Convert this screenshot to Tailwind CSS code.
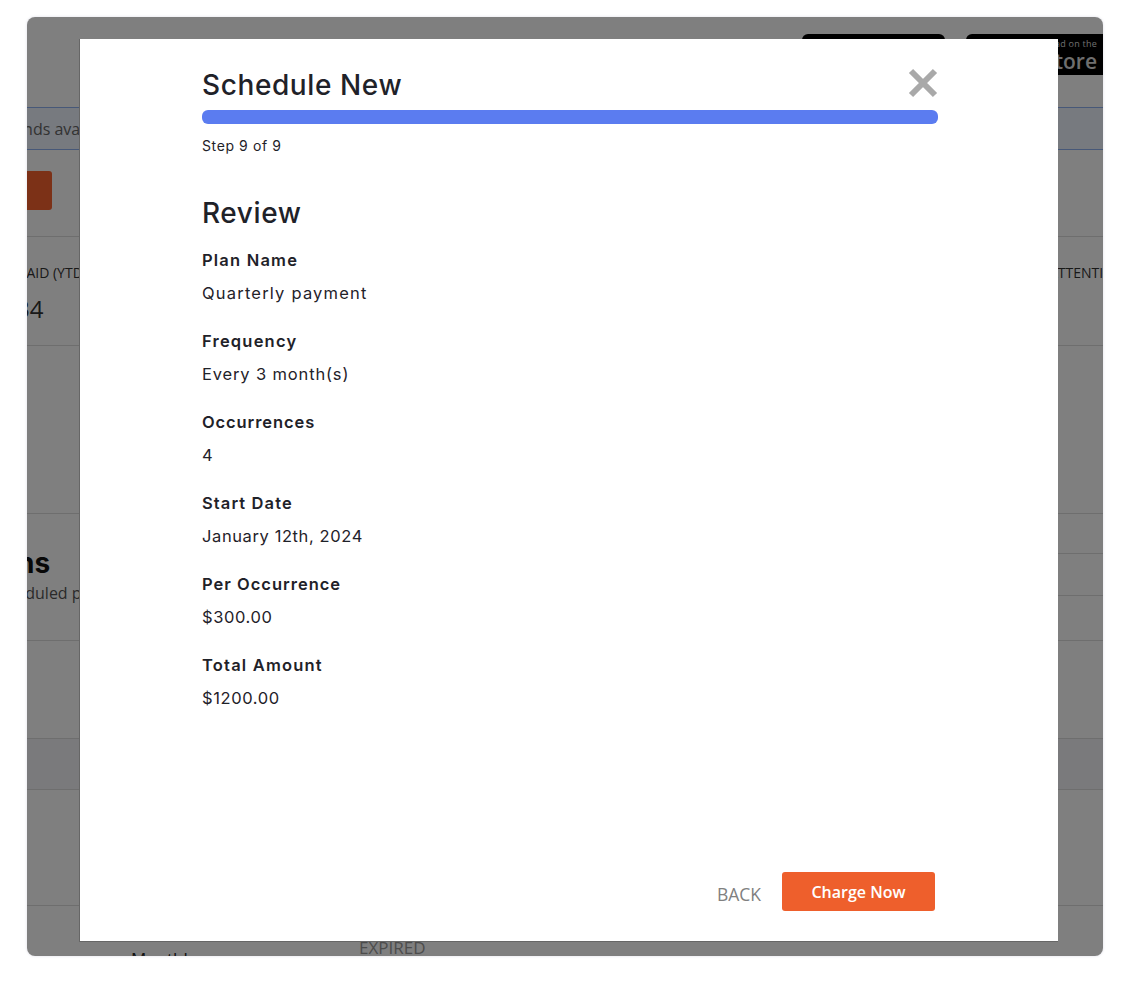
<!DOCTYPE html>
<html lang="en">
<head>
    <meta charset="UTF-8">
    <title>Schedule New</title>
    <script src="https://cdn.jsdelivr.net/npm/@tailwindcss/browser@4"></script>
</head>
<body class="bg-white h-[1002px] overflow-hidden font-['Open_Sans',sans-serif]">
    <div class="relative mt-[17px] ml-[27px] w-[1076px] h-[939px] rounded-lg overflow-hidden bg-white shadow-[0_0_3px_#dcdce6]">

        <!-- page behind the modal -->
        <div class="h-[90px] flex justify-end gap-[21px] pt-[17px]">
            <div class="w-[143px] h-[41px] bg-black rounded-md"></div>
            <div class="w-[137px] h-[41px] bg-black rounded-l-md text-[#ddd] text-right pr-[6px]">
                <div class="text-[9px] leading-[10px] pt-[5px] tracking-wide">Download on the</div>
                <div class="text-[21px] leading-[24px] font-semibold">App Store</div>
            </div>
        </div>
        <div class="h-[43px] border-y border-[#8fb0f0] bg-[#eef4ff] flex items-center whitespace-nowrap -ml-[22px] text-[16px] text-[#666]">Funds available</div>
        <div class="h-[86px] pt-[21px]">
            <div class="w-[25px] h-[39px] bg-[#f9622f] rounded-r-[3px]"></div>
        </div>
        <div class="h-[109px] border-t border-[#ddd] flex justify-between text-[#333]">
            <div class="w-[52px] overflow-hidden whitespace-nowrap">
                <div class="-ml-[9px] text-[14px] leading-[19px] pt-[26px]">PAID (YTD)</div>
                <div class="-ml-[11px] text-[24px] leading-[32px] mt-[11px]">34</div>
            </div>
            <div class="w-[45px] overflow-hidden whitespace-nowrap">
                <div class="-ml-[9px] text-[14px] leading-[19px] pt-[26px]">ATTENTION</div>
            </div>
        </div>
        <div class="h-[168px] border-t border-[#ddd]"></div>
        <div class="h-[127px] border-t border-[#ddd] flex justify-between">
            <div class="w-[52px] overflow-hidden whitespace-nowrap">
                <div class="-ml-[52px] font-['Inter',sans-serif] font-bold text-[28px] leading-[34px] text-[#111] pt-[32px]">Plans</div>
                <div class="-ml-[37px] text-[16px] leading-[22px] text-[#555] mt-[2px]">Scheduled payments</div>
            </div>
            <div class="w-[45px]">
                <div class="h-[40px] border-b border-[#ddd]"></div>
                <div class="h-[42px] border-b border-[#ddd]"></div>
            </div>
        </div>
        <div class="h-[98px] border-t border-[#ddd]"></div>
        <div class="h-[52px] border-y border-[#ddd] bg-[#f5f5f8]"></div>
        <div class="h-[115px]"></div>
        <div class="h-[60px] border-t border-[#ddd]">
            <div class="flex whitespace-nowrap">
                <div class="w-[332px] pl-[104px] pt-[42px] text-[17px] leading-[22px] font-medium text-[#222]">Monthly</div>
                <div class="text-[17px] leading-[22px] text-[#999] pt-[31px]">EXPIRED</div>
            </div>
        </div>

        <!-- overlay + modal -->
        <div class="absolute inset-0 bg-black/50 pt-[22px] pl-[52px]">
            <div class="w-[979px] h-[903px] bg-white border-l border-b border-[#666] pt-[29px] pb-[30px] pl-[122px] pr-[120px] flex flex-col text-[#1f2229] font-['Inter',sans-serif]">
                <div class="flex justify-between items-start h-[42px]">
                    <h1 class="text-[28px] leading-[34px] font-medium tracking-[0.6px]">Schedule New</h1>
                    <svg class="w-[30px] h-[30px]" viewBox="0 0 30 30" fill="none" stroke="#a9a9a9" stroke-width="6">
                        <path d="M3 3 L27 27 M27 3 L3 27"/>
                    </svg>
                </div>
                <div class="h-[14px] w-[736px] rounded-[6px] bg-[#5b7cf0]"></div>
                <div class="text-[14px] leading-[18px] mt-[13px] tracking-[0.6px]">Step 9 of 9</div>
                <h2 class="text-[28px] leading-[34px] font-medium mt-[41px] tracking-[0.6px]">Review</h2>

                <div class="flex flex-col gap-[15px] mt-[14px] text-[16.5px] leading-[33px] tracking-[0.6px]">
                    <div class="h-[66px]"><div class="font-semibold tracking-[1.2px]">Plan Name</div><div class="tracking-[1.2px]">Quarterly payment</div></div>
                    <div class="h-[66px]"><div class="font-semibold tracking-[1.2px]">Frequency</div><div class="tracking-[0.85px]">Every 3 month(s)</div></div>
                    <div class="h-[66px]"><div class="font-semibold tracking-[0.9px]">Occurrences</div><div>4</div></div>
                    <div class="h-[66px]"><div class="font-semibold tracking-[1.1px]">Start Date</div><div>January 12th, 2024</div></div>
                    <div class="h-[66px]"><div class="font-semibold tracking-[1px]">Per Occurrence</div><div>$300.00</div></div>
                    <div class="h-[66px]"><div class="font-semibold tracking-[1.2px]">Total Amount</div><div>$1200.00</div></div>
                </div>

                <div class="mt-auto flex justify-end items-center gap-[21px] pr-[3px] font-['Open_Sans',sans-serif]">
                    <button class="text-[17.5px] text-[#808080] mt-[6px]">BACK</button>
                    <button class="w-[153px] h-[39px] bg-[#ee5f2c] rounded-[3px] text-white text-[16px] font-semibold">Charge Now</button>
                </div>
            </div>
        </div>
    </div>
</body>
</html>
